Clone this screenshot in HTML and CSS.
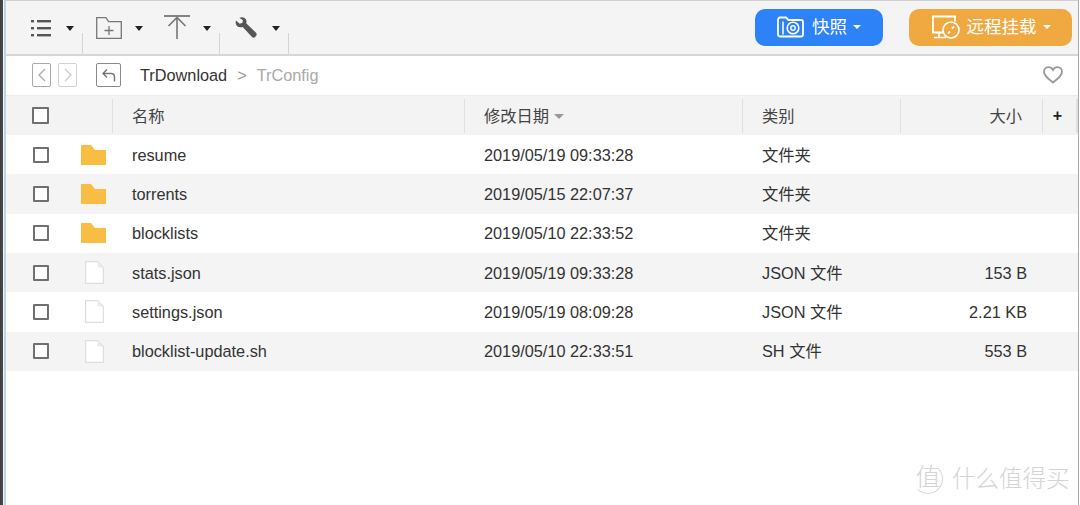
FILE: index.html
```html
<!DOCTYPE html>
<html lang="zh-CN">
<head>
<meta charset="utf-8">
<title>File Station</title>
<link rel="stylesheet" href="styles.css">
</head>
<body>
<div class="screen">
  <div class="edge"></div>
  <main class="window">
    <header class="toolbar">
      <svg class="ic ic-list" viewBox="0 0 20 18"><g fill="#555"><rect x="0" y="1" width="3" height="2.4"/><rect x="0" y="8" width="3" height="2.4"/><rect x="0" y="15" width="3" height="2.4"/><rect x="6" y="1" width="14" height="2.4"/><rect x="6" y="8" width="14" height="2.4"/><rect x="6" y="15" width="14" height="2.4"/></g></svg>
      <span class="caret c1"></span>
      <span class="divider"></span>
      <svg class="ic ic-folder" viewBox="0 0 26 22"><path d="M.7.7h9.3l2.6 4H25.300v16.600H.7z" fill="none" stroke="#777" stroke-width="1.300"/><path d="M13 9v9M8.500 13.500h9" stroke="#777" stroke-width="1.300"/></svg>
      <span class="caret c2"></span>
      <svg class="ic ic-up" viewBox="0 0 26 24"><path d="M0 1h26" stroke="#777" stroke-width="1.800"/><path d="M13 24V2M4.500 11 13 2.500 21.500 11" fill="none" stroke="#777" stroke-width="1.600"/></svg>
      <span class="caret c2"></span>
      <span class="divider"></span>
      <svg class="ic ic-wrench" viewBox="0 0 22 21"><path d="M1 3.600 4.700 6.800 7.500 5.800 7.800 3 4.400.9C7-.3 10.500.5 11.300 3.300c.3 1 .3 2.100-.1 3L21 15.800c.9 1 .9 2.300 0 3.300l-.9.900c-1 .9-2.200.8-3.100-.1L7.700 9.900c-3 1-6-.1-6.800-2.900-.3-1.100-.3-2.300.1-3.400z" fill="#555"/></svg>
      <span class="caret c3"></span>
      <span class="divider"></span>
      <div class="actions">
        <button class="btn btn-blue">
          <svg class="btn-ic ic-cam" viewBox="0 0 27 22"><path d="M1 4c0-1.500.8-2.500 2-2.500h6l2.500 2.500H24c1.300 0 2 .8 2 2v12.500c0 1.300-.8 2-2 2H3c-1.300 0-2-.8-2-2z" fill="none" stroke="#fff" stroke-width="1.800"/><path d="M6 5.500v13" stroke="#fff" stroke-width="1.500"/><circle cx="16" cy="12" r="5.800" fill="none" stroke="#fff" stroke-width="1.600"/><circle cx="16" cy="12" r="2.200" fill="none" stroke="#fff" stroke-width="1.400"/></svg>
          <span>快照</span><span class="btn-caret"></span>
        </button>
        <button class="btn btn-orange">
          <svg class="btn-ic ic-mon" viewBox="0 0 29 24"><path d="M12 17.500H2V1.500h22v5" fill="none" stroke="#fff" stroke-width="1.800"/><path d="M3 22.500h12M8 18v4" stroke="#fff" stroke-width="1.700"/><circle cx="20" cy="15" r="8" fill="none" stroke="#fff" stroke-width="1.600"/><path d="M17 18.500l2-2M21 13.500l2-2" stroke="#fff" stroke-width="1.800"/></svg>
          <span>远程挂载</span><span class="btn-caret"></span>
        </button>
      </div>
    </header>

    <nav class="crumbs">
      <span class="nav-box"><svg viewBox="0 0 8 14"><path d="M7 1 1 7l6 6" fill="none" stroke="#aaa" stroke-width="1.300"/></svg></span>
      <span class="nav-box off"><svg viewBox="0 0 8 14"><path d="M1 1l6 6-6 6" fill="none" stroke="#ccc" stroke-width="1.300"/></svg></span>
      <span class="nav-box up"><svg viewBox="0 0 14 14"><path d="M5 1.500 1 5.500l4 4M1.500 5.500H9c2.500 0 3.500 1.500 3.500 3.500v4.500" fill="none" stroke="#777" stroke-width="1.500"/></svg></span>
      <span class="crumb">TrDownload</span>
      <span class="sep">&gt;</span>
      <span class="crumb cur">TrConfig</span>
      <svg class="heart" viewBox="0 0 20 18"><path d="M10 16.500C5 12.500 1 9.800 1 5.800 1 3 3 1.200 5.500 1.200c1.900 0 3.500 1 4.500 2.800 1-1.800 2.600-2.800 4.500-2.800C17 1.200 19 3 19 5.800c0 4-4 6.700-9 10.700z" fill="#fff" stroke="#999" stroke-width="1.800"/></svg>
    </nav>

    <div class="thead">
      <div class="th th-check"><span class="box big"></span></div>
      <div class="th th-name">名称</div>
      <div class="th th-date">修改日期<span class="sort"></span></div>
      <div class="th th-type">类别</div>
      <div class="th th-size">大小</div>
      <div class="th th-plus">+</div>
    </div>

    <section class="rows">
      <div class="row"><span class="cell-check"><span class="box"></span></span><span class="cell-icon"><svg class="folder" viewBox="0 0 25 20"><path d="M0 0h10l4 5h11v15H0z" fill="#f9bd44"/></svg></span><span>resume</span><span>2019/05/19 09:33:28</span><span>文件夹</span><span class="size"></span></div>
      <div class="row"><span class="cell-check"><span class="box"></span></span><span class="cell-icon"><svg class="folder" viewBox="0 0 25 20"><path d="M0 0h10l4 5h11v15H0z" fill="#f9bd44"/></svg></span><span>torrents</span><span>2019/05/15 22:07:37</span><span>文件夹</span><span class="size"></span></div>
      <div class="row"><span class="cell-check"><span class="box"></span></span><span class="cell-icon"><svg class="folder" viewBox="0 0 25 20"><path d="M0 0h10l4 5h11v15H0z" fill="#f9bd44"/></svg></span><span>blocklists</span><span>2019/05/10 22:33:52</span><span>文件夹</span><span class="size"></span></div>
      <div class="row"><span class="cell-check"><span class="box"></span></span><span class="cell-icon"><svg class="file" viewBox="0 0 19 23"><path d="M.6.600h12l5.800 6v15.800H.6z" fill="#fff" stroke="#dcdfe2" stroke-width="1.200"/><path d="M12.600.600l5.800 6h-5.800z" fill="#e8eaec"/></svg></span><span>stats.json</span><span>2019/05/19 09:33:28</span><span>JSON 文件</span><span class="size">153 B</span></div>
      <div class="row"><span class="cell-check"><span class="box"></span></span><span class="cell-icon"><svg class="file" viewBox="0 0 19 23"><path d="M.6.600h12l5.800 6v15.800H.6z" fill="#fff" stroke="#dcdfe2" stroke-width="1.200"/><path d="M12.600.600l5.800 6h-5.800z" fill="#e8eaec"/></svg></span><span>settings.json</span><span>2019/05/19 08:09:28</span><span>JSON 文件</span><span class="size">2.21 KB</span></div>
      <div class="row"><span class="cell-check"><span class="box"></span></span><span class="cell-icon"><svg class="file" viewBox="0 0 19 23"><path d="M.6.600h12l5.800 6v15.800H.6z" fill="#fff" stroke="#dcdfe2" stroke-width="1.200"/><path d="M12.600.600l5.800 6h-5.800z" fill="#e8eaec"/></svg></span><span>blocklist-update.sh</span><span>2019/05/10 22:33:51</span><span>SH 文件</span><span class="size">553 B</span></div>
    </section>
  </main>
</div>
<div class="watermark"><span class="wm-seal">值</span><span class="wm-text">什么值得买</span></div>
</body>
</html>
```
FILE: styles.css
```css
* { box-sizing: border-box; }
html, body { margin: 0; height: 100%; overflow: hidden; background: #fff; }
body {
  font-family: "Liberation Sans", "Noto Sans CJK SC", sans-serif;
  font-size: 16.3px;
  line-height: 20px;
  color: #333;
  position: relative;
}
.screen { display: flex; height: 505px; }
.edge {
  width: 6px;
  flex: none;
  background: linear-gradient(90deg, #3f3f3f 0, #4a4a4a 3px, #f2f6f9 3px, #f2f6f9 4px, #bad4e8 4px, #bad4e8 6px);
}
.window {
  width: 1073px;
  flex: none;
  border-right: 1.5px solid #a9a9a9;
  border-top: 1px solid #cfcfcf;
  display: flex;
  flex-direction: column;
}

/* toolbar */
.toolbar {
  height: 55px;
  flex: none;
  background: #f4f4f4;
  border-bottom: 2px solid #d6d6d6;
  display: flex;
  align-items: center;
  padding-left: 25px;
}
.ic { display: block; flex: none; }
.ic-list { width: 20px; height: 18px; margin-right: 15px; }
.ic-folder { width: 26px; height: 22px; margin: 0 13px 0 13px; }
.ic-up { width: 26px; height: 24px; margin: -1px 13px 0 21px; }
.ic-wrench { width: 22px; height: 21px; margin: -1px 15px 0 15px; }
.caret {
  flex: none;
  width: 0; height: 0;
  border: 4px solid transparent;
  border-top: 5px solid #222;
  border-bottom: 0;
  margin-top: 2px;
}
.c1, .c3 { margin-right: 8px; }
.c2 + .divider { margin-left: 8px; }
.divider {
  flex: none;
  width: 1px;
  height: 21px;
  background: #d4d4d4;
  align-self: flex-end;
}
.actions { margin-left: auto; display: flex; gap: 26px; padding-right: 6px; }
.btn {
  height: 37px;
  border: 0;
  border-radius: 10px;
  color: #fff;
  font: inherit;
  font-size: 17.5px;
  display: flex;
  align-items: center;
  justify-content: center;
  padding: 0;
  margin-top: -1px;
}
.btn-blue { width: 128px; background: #2d82f8; }
.btn-orange { width: 163px; background: #f0a840; }
.btn-ic { flex: none; display: block; }
.ic-cam { width: 27px; height: 22px; margin-right: 8px; }
.ic-mon { width: 29px; height: 24px; margin-right: 7px; }
.btn-caret {
  width: 0; height: 0;
  border: 4px solid transparent;
  border-top: 4.500px solid #fff;
  border-bottom: 0;
  margin-left: 6px;
}

/* breadcrumb */
.crumbs {
  height: 40px;
  flex: none;
  background: #fff;
  border-bottom: 1px solid #ececec;
  display: flex;
  align-items: center;
  padding: 0 0 1px 26px;
}
.nav-box {
  width: 19px;
  height: 24px;
  border: 1.500px solid #aaa;
  border-radius: 2px;
  display: flex;
  align-items: center;
  justify-content: center;
  margin-right: 7px;
}
.nav-box svg { width: 8px; height: 14px; display: block; }
.nav-box.off { border-color: #d2d2d2; margin-right: 19px; }
.nav-box.up { width: 25px; border-color: #8a8a8a; margin-right: 19px; }
.nav-box.up svg { width: 14px; height: 14px; }
.crumb { color: #333; }
.sep { color: #999; margin: 0 10px; }
.cur { color: #a9a9a9; }
.heart { width: 20px; height: 18px; margin-left: auto; margin-right: 15px; }

/* table header */
.thead {
  height: 39px;
  flex: none;
  background: #f3f3f3;
  display: flex;
  align-items: center;
  color: #444;
}
.th {
  height: 34px;
  display: flex;
  align-items: center;
  border-left: 1px solid #e0e0e0;
  padding-left: 19px;
  flex: none;
}
.th-check { width: 106px; border-left: 0; padding-left: 26px; }
.th-name { width: 352px; }
.th-date { width: 278px; }
.th-type { width: 158px; }
.th-size { width: 142px; justify-content: flex-end; padding-right: 20px; }
.th-plus {
  flex: 1;
  padding: 0 4px 0 0;
  justify-content: center;
  font-weight: 700;
  color: #222;
  font-size: 16px;
  border-right: 2px solid #e0e0e0;
}
.sort {
  width: 0; height: 0;
  border: 5px solid transparent;
  border-top: 5px solid #999;
  border-bottom: 0;
  margin: 2px 0 0 5px;
}
.box {
  display: block;
  width: 16px;
  height: 16px;
  border: 2px solid #707070;
  background: #fff;
  border-radius: 1px;
}
.box.big { width: 17px; height: 17px; }

/* rows */
.row {
  height: 39.33px;
  display: grid;
  grid-template-columns: 75px 51px 352px 278px 158px 1fr;
  align-items: center;
  background: #fff;
}
.row:nth-child(even) { background: #f4f4f4; }
.cell-check { padding-left: 27px; }
.cell-icon { display: flex; }
.folder { width: 25px; height: 20px; display: block; }
.file { width: 19px; height: 23px; display: block; margin-left: 4px; }
.size { text-align: right; padding-right: 51px; margin-left: -20px; }

/* watermark */
.watermark {
  position: absolute;
  left: 913px;
  top: 464px;
  display: flex;
  align-items: center;
  color: #d4d4d4;
}
.wm-seal {
  width: 30px;
  height: 30px;
  border: 1.500px solid #d4d4d4;
  border-left-color: transparent;
  border-top-color: transparent;
  border-radius: 50%;
  font-size: 25px;
  line-height: 25px;
  text-align: center;
  margin-right: 9px;
  font-weight: 300;
}
.wm-text { font-size: 23.500px; font-weight: 300; line-height: 30px; }
```
